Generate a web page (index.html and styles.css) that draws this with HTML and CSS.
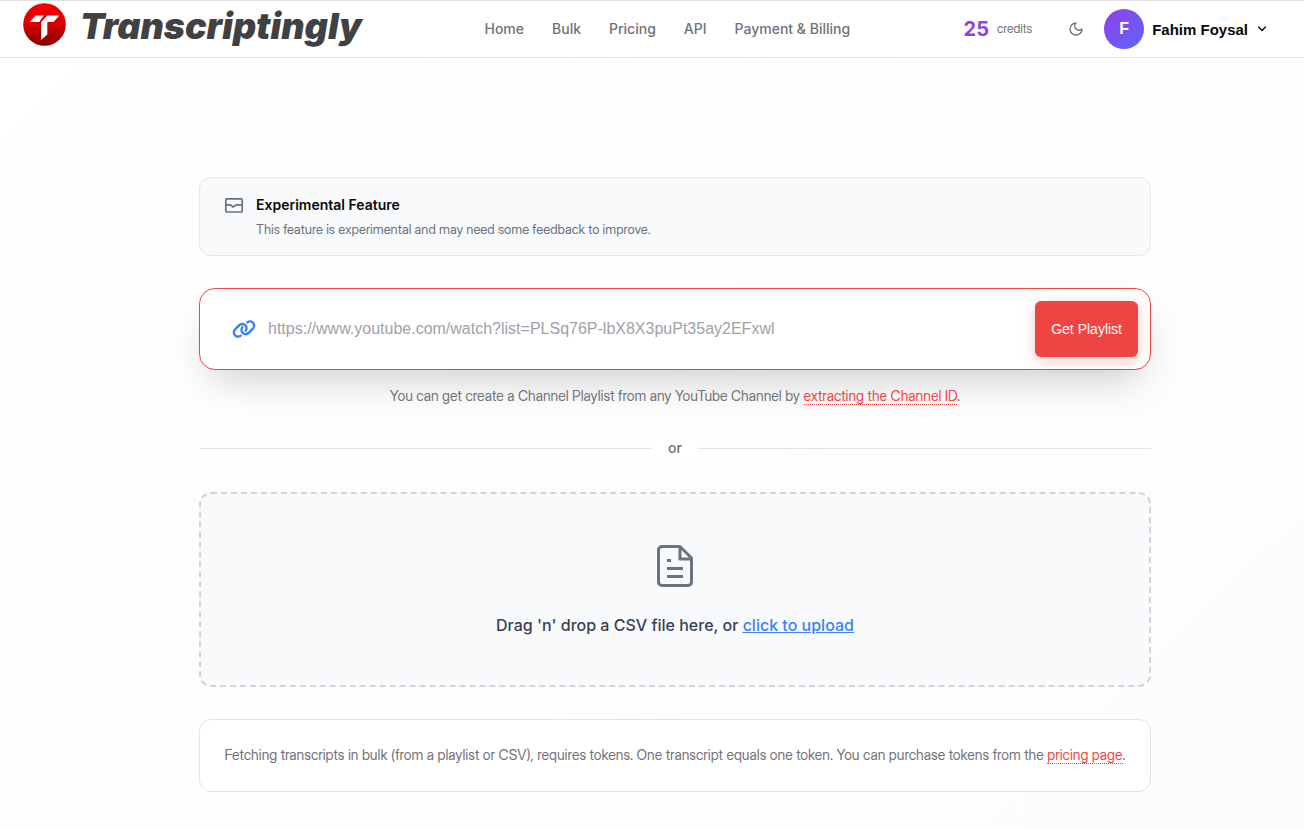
FILE: index.html
```html
<!DOCTYPE html>
<html lang="en">
  <head>
    <meta charset="utf-8">
    <meta name="viewport" content="width=device-width, initial-scale=1">
    <title>Transcriptingly</title>
    <link rel="stylesheet" href="styles.css">
  </head>
  <body>
    <header class="header">
      <a href="#" class="logo">
        <svg class="logo-mark" viewBox="0 0 43 43" aria-hidden="true">
          <defs>
            <linearGradient id="logoRed" x1="0" y1="0" x2="0" y2="1">
              <stop offset="0" stop-color="#f90000"/>
              <stop offset="0.5" stop-color="#d60000"/>
              <stop offset="1" stop-color="#850000"/>
            </linearGradient>
          </defs>
          <circle cx="21.500" cy="21.500" r="21.300" fill="url(#logoRed)"/>
          <path d="M12.500 12.500H21L18 16.300L16.300 18.900H6.800Z" fill="#fff"/>
          <path d="M24.300 12.500H36.300L30.500 18.900H24.300V31.500L18.200 37V18.900Z" fill="#fff"/>
        </svg>
        <span class="logo-text">Transcriptingly</span>
      </a>
      <nav class="nav">
        <a href="#">Home</a>
        <a href="#">Bulk</a>
        <a href="#">Pricing</a>
        <a href="#">API</a>
        <a href="#">Payment &amp; Billing</a>
      </nav>
      <div class="account">
        <div class="credits"><strong>25</strong><span>credits</span></div>
        <button type="button" class="theme-btn" aria-label="Toggle theme">
          <svg width="16" height="16" viewBox="0 0 24 24" fill="none" stroke="currentColor" stroke-width="2" stroke-linecap="round" stroke-linejoin="round"><path d="M12 3a6 6 0 0 0 9 9 9 9 0 1 1-9-9Z"/></svg>
        </button>
        <button type="button" class="user-btn">
          <span class="avatar">F</span>
          <span class="user-name">Fahim Foysal</span>
          <svg width="12" height="12" viewBox="0 0 24 24" fill="none" stroke="currentColor" stroke-width="2.500" stroke-linecap="round" stroke-linejoin="round"><path d="m5 8 7 7 7-7"/></svg>
        </button>
      </div>
    </header>

    <main class="main">
      <div class="container">
        <section class="notice">
          <svg width="20" height="20" viewBox="0 0 20 20" fill="none" stroke="currentColor" stroke-width="1.700" stroke-linejoin="round" aria-hidden="true">
            <rect x="1.800" y="3.800" width="16.400" height="13.200" rx="1"/>
            <path d="M2 9.800H6.500L9 12L12.500 9.800H18"/>
          </svg>
          <div>
            <h2>Experimental Feature</h2>
            <p>This feature is experimental and may need some feedback to improve.</p>
          </div>
        </section>

        <form class="playlist-form">
          <label for="playlistUrl" aria-label="Playlist URL">
            <svg width="24" height="20" viewBox="0 0 640 512" fill="currentColor" aria-hidden="true">
              <path d="M579.8 267.7c56.5-56.5 56.5-148 0-204.5c-50-50-128.8-56.5-186.3-15.4l-1.6 1.1c-14.4 10.3-17.7 30.3-7.4 44.6s30.3 17.7 44.6 7.4l1.6-1.1c32.1-22.9 76-19.3 103.8 8.6c31.5 31.5 31.5 82.5 0 114L422.3 334.8c-31.5 31.5-82.5 31.5-114 0c-27.9-27.9-31.5-71.8-8.6-103.8l1.1-1.6c10.3-14.4 6.9-34.4-7.4-44.6s-34.4-6.9-44.6 7.4l-1.1 1.6C206.500 251.200 213 330 263 380c56.500 56.500 148 56.500 204.500 0L579.800 267.700zM60.200 244.300c-56.500 56.500-56.500 148 0 204.500c50 50 128.800 56.500 186.300 15.400l1.600-1.100c14.400-10.300 17.700-30.300 7.400-44.600s-30.300-17.700-44.600-7.400l-1.600 1.100c-32.100 22.900-76 19.300-103.800-8.600C74 372 74 321 105.500 289.500L217.700 177.200c31.500-31.500 82.500-31.500 114 0c27.900 27.900 31.500 71.800 8.600 103.900l-1.100 1.600c-10.300 14.400-6.900 34.400 7.400 44.600s34.400 6.900 44.600-7.400l1.100-1.600C433.500 260.800 427 182 377 132c-56.500-56.500-148-56.500-204.500 0L60.200 244.300z"/>
            </svg>
          </label>
          <input type="text" id="playlistUrl" placeholder="https://www.youtube.com/watch?list=PLSq76P-lbX8X3puPt35ay2EFxwl">
          <button type="submit">Get Playlist</button>
        </form>

        <p class="hint">You can get create a Channel Playlist from any YouTube Channel by <a href="#" class="red-link">extracting the Channel ID</a>.</p>

        <div class="divider"><span>or</span></div>

        <section class="dropzone">
          <svg width="48" height="48" viewBox="0 0 24 24" fill="none" stroke="currentColor" stroke-width="1.500" stroke-linejoin="round" aria-hidden="true">
            <path d="M14.500 2.250H5.500A1.750 1.750 0 0 0 3.750 4V20a1.750 1.750 0 0 0 1.750 1.750h13A1.750 1.750 0 0 0 20.250 20V8L14.500 2.250V8.500H20.250"/>
            <path d="M8 9.250h2M8 13.250h8M8 17.250h8"/>
          </svg>
          <p>Drag 'n' drop a CSV file here, or <a href="#">click to upload</a></p>
        </section>

        <section class="tokens">
          <p>Fetching transcripts in bulk (from a playlist or CSV), requires tokens. One transcript equals one token. You can purchase tokens from the <a href="#" class="red-link">pricing page</a>.</p>
        </section>
      </div>
    </main>
  </body>
</html>
```
FILE: styles.css
```css
* {
  box-sizing: border-box;
}
body {
  margin: 0;
  min-height: 100vh;
  font-family: Inter, "Liberation Sans", sans-serif;
  font-size: 14px;
  line-height: 20px;
  color: #71717a;
  background: linear-gradient(135deg, #ffffff, #fcfcfc);
}
h2, p {
  margin: 0;
}
a {
  color: inherit;
  text-decoration: none;
}
button {
  font-family: "Liberation Sans", Arial, sans-serif;
  border: 0;
  cursor: pointer;
}
svg {
  display: block;
  flex-shrink: 0;
}

/* header */
.header {
  display: flex;
  align-items: center;
  justify-content: space-between;
  height: 58px;
  padding: 0 36px 0 23px;
  background: #fff;
  border-top: 1px solid #e0e0e0;
  border-bottom: 1px solid #e4e4e7;
}
.logo {
  display: flex;
  align-items: center;
  gap: 14px;
  padding-bottom: 10px;
}
.logo-mark {
  width: 43px;
  height: 43px;
}
.logo-text {
  padding-top: 4px;
  font-size: 36px;
  line-height: 40px;
  font-weight: 900;
  font-style: italic;
  color: #414042;
}
.nav {
  display: flex;
  gap: 28px;
  padding-left: 9px;
  font-weight: 500;
}
.account {
  display: flex;
  align-items: center;
}
.credits {
  display: flex;
  align-items: center;
  gap: 8px;
  font-family: "Inter Display", Roboto, sans-serif;
  font-size: 12px;
}
.credits strong {
  font-family: Inter, sans-serif;
  font-size: 20px;
  font-weight: 700;
  color: #8b45ea;
}
.theme-btn {
  padding: 0;
  margin: 0 20px 0 36px;
  color: #71717a;
  background: none;
}
.user-btn {
  display: flex;
  align-items: center;
  gap: 8px;
  padding: 0;
  color: #09090b;
  background: none;
}
.avatar {
  width: 40px;
  height: 40px;
  border-radius: 50%;
  font-size: 16px;
  line-height: 40px;
  font-weight: 700;
  color: #fff;
  background: linear-gradient(135deg, #9340ea, #5b66f5);
}
.user-name {
  font-size: 15px;
  font-weight: 700;
}

/* page content */
.main {
  padding: 119px 24px 37px 70px;
}
.container {
  max-width: 952px;
  margin: 0 auto;
}
.notice {
  display: flex;
  gap: 12px;
  padding: 17px 24px 16px;
  margin-bottom: 32px;
  color: #6b7280;
  background: #f8fafc;
  border: 1px solid #e5e7eb;
  border-radius: 12px;
}
.notice h2 {
  margin-bottom: 4px;
  font-size: 14px;
  line-height: 20px;
  font-weight: 600;
  color: #09090b;
}
.notice p {
  font-size: 13px;
}
.notice p,
.hint,
.tokens {
  font-family: "Inter Display", Roboto, sans-serif;
}
.playlist-form {
  display: flex;
  align-items: center;
  padding: 12px 12px 12px 32px;
  background: #fff;
  border: 1px solid #ef4444;
  border-radius: 16px;
  box-shadow: 0 20px 40px -12px rgba(0, 0, 0, 0.2);
}
.playlist-form label {
  color: #3b82f6;
}
.playlist-form input {
  flex: 1;
  min-width: 0;
  height: 56px;
  padding: 0 12px;
  font-family: "Liberation Sans", Arial, sans-serif;
  font-size: 16px;
  border: 0;
  outline: 0;
  background: none;
}
.playlist-form input::placeholder {
  color: #a1a1aa;
}
.playlist-form button {
  height: 56px;
  padding: 0 16px;
  font-size: 14px;
  font-weight: 500;
  color: #fff;
  background: #ef4444;
  border-radius: 6px;
  box-shadow: 0 4px 14px rgba(239, 68, 68, 0.3);
}
.hint {
  margin-top: 16px;
  text-align: center;
}
.red-link {
  color: #ef4444;
  border-bottom: 1px dotted #ef4444;
}
.divider {
  display: flex;
  align-items: center;
  margin: 32px 0 34px;
  font-weight: 500;
}
.divider::before,
.divider::after {
  content: "";
  flex: 1;
  height: 1px;
  background: #e4e4e7;
}
.divider span {
  padding: 0 16px;
  background: #fff;
}
.dropzone {
  display: flex;
  flex-direction: column;
  align-items: center;
  gap: 23px;
  padding: 48px 24px;
  margin-bottom: 32px;
  color: #6b7280;
  background: #f9fafb;
  border: 2px dashed #d1d5db;
  border-radius: 12px;
}
.dropzone p {
  font-size: 16px;
  line-height: 24px;
  font-weight: 500;
  color: #374151;
}
.dropzone a {
  color: #3b82f6;
  text-decoration: underline;
}
.tokens {
  padding: 25px 24px 26px;
  text-align: center;
  background: #fff;
  border: 1px solid #e4e4e7;
  border-radius: 12px;
}
```
